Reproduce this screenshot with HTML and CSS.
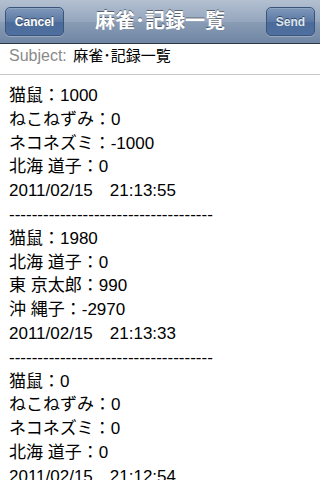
FILE: index.html
```html
<!DOCTYPE html>
<html lang="ja">
<head>
<meta charset="utf-8">
<title>麻雀･記録一覧</title>
<link rel="stylesheet" href="styles.css">
</head>
<body>
<div class="screen">
  <header class="nav">
    <div class="nav-left"><button class="nav-btn cancel">Cancel</button></div>
    <h1 class="nav-title">麻雀･記録一覧</h1>
    <div class="nav-right"><button class="nav-btn send">Send</button></div>
  </header>
  <div class="subject">
    <span class="subject-label">Subject:</span>
    <span class="subject-value">麻雀･記録一覧</span>
  </div>
  <div class="body-text">
    <div class="line">猫鼠：1000</div>
    <div class="line">ねこねずみ：0</div>
    <div class="line">ネコネズミ：-1000</div>
    <div class="line">北海 道子：0</div>
    <div class="line">2011/02/15　21:13:55</div>
    <div class="line">------------------------------------</div>
    <div class="line">猫鼠：1980</div>
    <div class="line">北海 道子：0</div>
    <div class="line">東 京太郎：990</div>
    <div class="line">沖 縄子：-2970</div>
    <div class="line">2011/02/15　21:13:33</div>
    <div class="line">------------------------------------</div>
    <div class="line">猫鼠：0</div>
    <div class="line">ねこねずみ：0</div>
    <div class="line">ネコネズミ：0</div>
    <div class="line">北海 道子：0</div>
    <div class="line">2011/02/15　21:12:54</div>
  </div>
</div>
</body>
</html>
```
FILE: styles.css
```css
html, body {
  margin: 0;
  padding: 0;
  background: #ffffff;
}

.screen {
  width: 320px;
  height: 480px;
  overflow: hidden;
  font-family: "Liberation Sans", "Noto Sans CJK JP", sans-serif;
  background: #ffffff;
}

.nav {
  height: 43px;
  border-bottom: 1px solid #2d3642;
  background: linear-gradient(#b3c0d1 0%, #95a6bd 50%, #8a9cb5 51%, #6f86a4 100%);
  display: grid;
  grid-template-columns: 1fr auto 1fr;
  align-items: center;
  padding: 0 5px;
}

.nav-left {
  display: flex;
  justify-content: flex-start;
}

.nav-right {
  display: flex;
  justify-content: flex-end;
}

.nav-title {
  margin: 0;
  color: #ffffff;
  font-size: 20px;
  font-weight: bold;
  line-height: 43px;
  text-shadow: 0 -1px 0 rgba(0, 0, 0, 0.45);
  white-space: nowrap;
}

.nav-btn {
  height: 29px;
  border: 1px solid #3b557a;
  border-radius: 5px;
  background: linear-gradient(#7f98bb 0%, #5b79a4 50%, #4b6b99 51%, #4f70a0 100%);
  box-shadow: 0 1px 0 rgba(255, 255, 255, 0.25), inset 0 1px 0 rgba(255, 255, 255, 0.15);
  color: #ffffff;
  font-family: "Liberation Sans", sans-serif;
  font-size: 12px;
  font-weight: bold;
  text-shadow: 0 -1px 0 rgba(0, 0, 0, 0.45);
  padding: 0;
}

.cancel {
  width: 59px;
}

.send {
  width: 49px;
  color: #dfe5ee;
}

.subject {
  height: 31px;
  border-bottom: 1px solid #c7c7c7;
  padding: 2px 0 0 9px;
  box-sizing: border-box;
  font-size: 16px;
  line-height: 20px;
  white-space: nowrap;
}

.subject-label {
  color: #8a8a8a;
}

.subject-value {
  color: #000000;
  font-size: 15px;
  margin-left: 2px;
}

.body-text {
  padding: 9px 0 0 9px;
  font-size: 17px;
  line-height: 23.8px;
  color: #000000;
}

.line {
  white-space: pre;
}
```
